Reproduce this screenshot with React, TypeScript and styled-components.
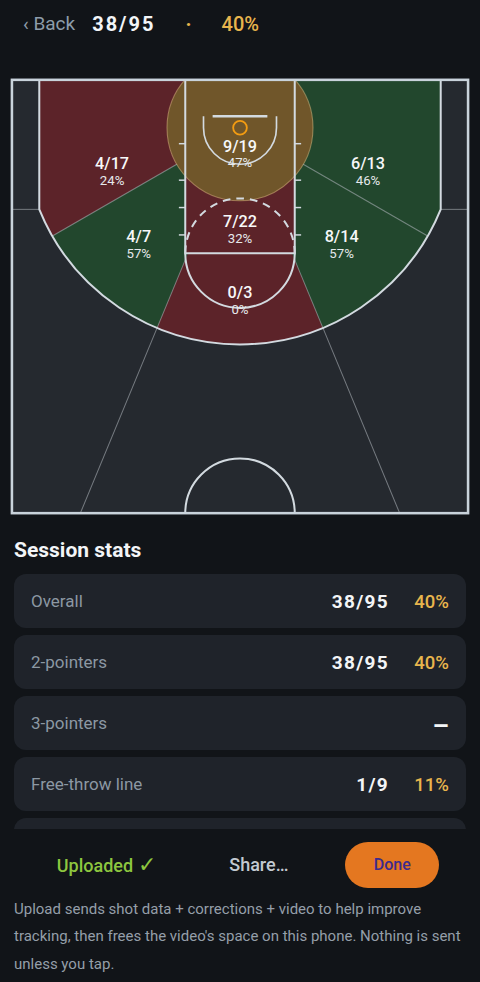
import React from "react";
import styled, { createGlobalStyle } from "styled-components";

const GlobalStyle = createGlobalStyle`
  html, body {
    margin: 0;
    padding: 0;
    background: #111418;
  }
  body {
    font-family: Roboto, "Noto Sans", "DejaVu Sans", sans-serif;
    -webkit-font-smoothing: antialiased;
  }
  * { box-sizing: border-box; }
`;

const C = {
  page: "#111418",
  card: "#1f232a",
  floor: "#25292f",
  red: "#5c2329",
  green: "#22472d",
  gold: "#70562a",
  line: "#d3dae0",
  ray: "rgba(200, 206, 212, 0.5)",
  hoop: "#f39c12",
  accent: "#e8b54d",
  muted: "#8c98a3",
  white: "#f3f5f7",
};

/* ---------- layout ---------- */

const Screen = styled.div`
  height: 100vh;
  display: flex;
  flex-direction: column;
  overflow: hidden;
  background: ${C.page};
`;

const Header = styled.header`
  flex-shrink: 0;
  height: 47px;
  display: flex;
  align-items: center;
  gap: 17px;
  padding: 0 23px;
`;

const BackButton = styled.button`
  border: 0;
  background: none;
  padding: 0;
  font: 400 19px Roboto, sans-serif;
  color: #8d9caa;
  cursor: pointer;
`;

const Score = styled.div`
  display: flex;
  align-items: baseline;
  gap: 30px;
  font-size: 20px;
`;

const Made = styled.span`
  font-weight: 700;
  color: ${C.white};
  letter-spacing: 2px;
`;

const Dot = styled.span`
  color: ${C.accent};
  font-weight: 700;
`;

const Pct = styled.span`
  color: ${C.accent};
  font-weight: 500;
`;

const CourtWrap = styled.div`
  flex-shrink: 0;
  padding: 31px 10px 0;
`;

const CourtSvg = styled.svg`
  display: block;
  width: 460px;
  height: 437px;
`;

const ZoneText = styled.text<{ $small?: boolean }>`
  font-family: Roboto, sans-serif;
  font-size: ${(p) => (p.$small ? "1.45px" : "1.78px")};
  font-weight: ${(p) => (p.$small ? 400 : 500)};
  fill: ${(p) => (p.$small ? "#e6e9ec" : "#f7f8f9")};
  text-anchor: middle;
`;

const Title = styled.h2`
  flex-shrink: 0;
  margin: 23px 14px 12px;
  font: 700 21px Roboto, sans-serif;
  color: ${C.white};
  line-height: normal;
`;

const StatList = styled.div`
  flex: 1;
  min-height: 0;
  overflow: hidden;
  padding: 0 14px;
  display: flex;
  flex-direction: column;
  gap: 7px;
`;

const StatRow = styled.div`
  flex-shrink: 0;
  height: 54px;
  border-radius: 12px;
  background: ${C.card};
  display: flex;
  align-items: center;
  justify-content: space-between;
  padding: 0 17px;
`;

const StatLabel = styled.span`
  font-size: 17px;
  color: ${C.muted};
`;

const StatFigures = styled.div`
  display: flex;
  align-items: baseline;
  gap: 24px;
`;

const StatMade = styled.span`
  font-size: 19px;
  font-weight: 700;
  letter-spacing: 1.3px;
  color: ${C.white};
`;

const StatPct = styled.span`
  min-width: 36px;
  text-align: right;
  font-size: 18.5px;
  font-weight: 500;
  color: ${C.accent};
`;

const Empty = styled.span`
  font-size: 26px;
  line-height: 1;
  font-weight: 700;
  color: ${C.white};
  margin-top: 5px;
`;

const Footer = styled.footer`
  flex-shrink: 0;
  padding: 13px 14px 4px;
  background: ${C.page};
`;

const Actions = styled.div`
  height: 46px;
  display: flex;
  align-items: center;
  justify-content: space-evenly;
  margin: 0 -14px;
`;

const TextButton = styled.button<{ $tone: "ok" | "plain" }>`
  border: 0;
  background: none;
  padding: 0 16px;
  display: flex;
  align-items: baseline;
  gap: 5px;
  font: 500 18px Roboto, sans-serif;
  color: ${(p) => (p.$tone === "ok" ? "#8dc63f" : "#c3cad1")};
  cursor: pointer;
`;

const Check = styled.span`
  font-family: "DejaVu Sans", sans-serif;
  font-size: 22px;
  line-height: 1;
  font-weight: 400;
`;

const DoneButton = styled.button`
  width: 94px;
  height: 46px;
  border: 0;
  border-radius: 23px;
  background: #e47720;
  color: #3b2a8e;
  font: 500 16px Roboto, sans-serif;
  cursor: pointer;
`;

const Note = styled.p`
  margin: 8px 0 0;
  font-size: 15px;
  line-height: 27.5px;
  color: #959fa9;
`;

/* ---------- court drawing (units: feet, hoop at 25, 5.25) ---------- */

const HX = 25;
const HY = 5.25;
const R3 = 23.75;
const CORNER_Y = HY + Math.sqrt(R3 * R3 - 22 * 22);
const LEN = 47.5;

const threePath = `M3,0 L3,${CORNER_Y} A${R3},${R3} 0 0 0 47,${CORNER_Y} L47,0 Z`;

type Zone = { points: string; fill: string };

const t30 = Math.tan(Math.PI / 6);
const t675 = Math.tan((67.5 * Math.PI) / 180);
const farY30 = HY + 65 * t30;
const x675 = (y: number) => (y - HY) / t675;

const zones: Zone[] = [
  { points: `${HX},${HY} ${HX},-1 -40,-1 -40,${farY30}`, fill: C.red },
  { points: `${HX},${HY} -40,${farY30} -40,60 ${HX - x675(60)},60`, fill: C.green },
  { points: `${HX},${HY} ${HX - x675(60)},60 ${HX + x675(60)},60`, fill: C.red },
  { points: `${HX},${HY} ${HX + x675(60)},60 90,60 90,${farY30}`, fill: C.green },
  { points: `${HX},${HY} 90,${farY30} 90,-1 ${HX},-1`, fill: C.green },
];

type Label = { x: number; y: number; made: string; pct: string };

const labels: Label[] = [
  { x: 10.98, y: 9.81, made: "4/17", pct: "24%" },
  { x: 25, y: 7.88, made: "9/19", pct: "47%" },
  { x: 39.03, y: 9.81, made: "6/13", pct: "46%" },
  { x: 13.9, y: 17.8, made: "4/7", pct: "57%" },
  { x: 25, y: 16.16, made: "7/22", pct: "32%" },
  { x: 36.14, y: 17.8, made: "8/14", pct: "57%" },
  { x: 25, y: 23.94, made: "0/3", pct: "0%" },
];

const ticks = [7, 11, 14, 17];

const c30 = Math.cos(Math.PI / 6);
const s30 = 0.5;
const laneExitY = HY + 6 * t675;

function Court() {
  return (
    <CourtSvg viewBox="-0.2 -0.2 50.4 47.9">
      <defs>
        <clipPath id="inside-arc">
          <path d={threePath} />
        </clipPath>
        <clipPath id="floor">
          <rect x={0} y={0} width={50} height={LEN} />
        </clipPath>
      </defs>

      <rect x={0} y={0} width={50} height={LEN} fill={C.floor} />

      <g clipPath="url(#inside-arc)">
        {zones.map((z, i) => (
          <polygon key={i} points={z.points} fill={z.fill} />
        ))}
      </g>

      {/* paint */}
      <rect x={19} y={0} width={12} height={19} fill={C.red} />

      {/* restricted zone */}
      <g clipPath="url(#floor)">
        <circle
          cx={HX}
          cy={HY}
          r={8}
          fill={C.gold}
          stroke="rgba(214, 180, 124, 0.55)"
          strokeWidth={0.12}
        />
      </g>

      {/* zone dividers */}
      <g stroke={C.ray} strokeWidth={0.11} fill="none">
        <line x1={HX - 8 * c30} y1={HY + 8 * s30} x2={HX - R3 * c30} y2={HY + R3 * s30} />
        <line x1={HX + 8 * c30} y1={HY + 8 * s30} x2={HX + R3 * c30} y2={HY + R3 * s30} />
        <line x1={19} y1={laneExitY} x2={HX - x675(LEN)} y2={LEN} />
        <line x1={31} y1={laneExitY} x2={HX + x675(LEN)} y2={LEN} />
        <line x1={0} y1={CORNER_Y} x2={3} y2={CORNER_Y} />
        <line x1={47} y1={CORNER_Y} x2={50} y2={CORNER_Y} />
      </g>

      {/* court markings */}
      <g stroke={C.line} strokeWidth={0.22} fill="none">
        <path d={`M3,0 L3,${CORNER_Y} A${R3},${R3} 0 0 0 47,${CORNER_Y} L47,0`} />
        <path d="M19,0 L19,19 L31,19 L31,0" />
        <path d="M19,19 A6,6 0 0 0 31,19" />
        <path d="M19,19 A6,6 0 0 1 31,19" strokeDasharray="0.85 0.65" />
        <path d="M21,4 L21,5.25 A4,4 0 0 0 29,5.25 L29,4" strokeWidth={0.18} />
        <path d={`M19,${LEN} A6,6 0 0 1 31,${LEN}`} />
        {ticks.map((y) => (
          <React.Fragment key={y}>
            <line x1={18.3} y1={y} x2={19} y2={y} strokeWidth={0.16} />
            <line x1={31} y1={y} x2={31.7} y2={y} strokeWidth={0.16} />
          </React.Fragment>
        ))}
        <line x1={22} y1={4} x2={28} y2={4} strokeWidth={0.28} />
        <rect x={0} y={0} width={50} height={LEN} strokeWidth={0.28} stroke="#c9d3db" />
      </g>

      <circle cx={HX} cy={HY} r={0.75} fill="none" stroke={C.hoop} strokeWidth={0.2} />

      {labels.map((l) => (
        <g key={l.made + l.x}>
          <ZoneText x={l.x} y={l.y}>
            {l.made}
          </ZoneText>
          <ZoneText $small x={l.x} y={l.y + 1.72}>
            {l.pct}
          </ZoneText>
        </g>
      ))}
    </CourtSvg>
  );
}

/* ---------- stats ---------- */

type Stat = { label: string; made?: string; pct?: string };

const stats: Stat[] = [
  { label: "Overall", made: "38/95", pct: "40%" },
  { label: "2-pointers", made: "38/95", pct: "40%" },
  { label: "3-pointers" },
  { label: "Free-throw line", made: "1/9", pct: "11%" },
];

export default function App() {
  return (
    <>
      <GlobalStyle />
      <Screen>
        <Header>
          <BackButton>‹ Back</BackButton>
          <Score>
            <Made>38/95</Made>
            <Dot>·</Dot>
            <Pct>40%</Pct>
          </Score>
        </Header>

        <CourtWrap>
          <Court />
        </CourtWrap>

        <Title>Session stats</Title>

        <StatList>
          {stats.map((s) => (
            <StatRow key={s.label}>
              <StatLabel>{s.label}</StatLabel>
              {s.made ? (
                <StatFigures>
                  <StatMade>{s.made}</StatMade>
                  <StatPct>{s.pct}</StatPct>
                </StatFigures>
              ) : (
                <Empty>–</Empty>
              )}
            </StatRow>
          ))}
          {/* next card in the scroll list, tucked under the footer */}
          <StatRow />
        </StatList>

        <Footer>
          <Actions>
            <TextButton $tone="ok">
              Uploaded<Check>✓</Check>
            </TextButton>
            <TextButton $tone="plain">Share…</TextButton>
            <DoneButton>Done</DoneButton>
          </Actions>
          <Note>
            Upload sends shot data + corrections + video to help improve tracking, then frees the
            video's space on this phone. Nothing is sent unless you tap.
          </Note>
        </Footer>
      </Screen>
    </>
  );
}
